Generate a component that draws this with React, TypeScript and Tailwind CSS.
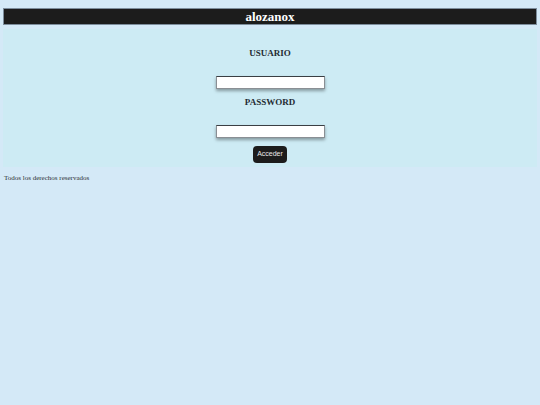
export default function App() {
  return (
    <div className="min-h-screen bg-[#d4e9f7] px-[3px] pt-[8px]" style={{ fontFamily: '"Liberation Serif", serif' }}>
      <header className="h-[17px] border border-[#7d8d9c] bg-[#1c1c1c] flex items-center justify-center">
        <h1 className="text-[13px] leading-none font-bold text-white">alozanox</h1>
      </header>

      <section className="mt-[4px] bg-[#cdebf4] pt-[19px] pb-[4px] flex flex-col items-center">
        <label className="text-[9px] leading-[11px] font-bold text-[#1f2b33]">USUARIO</label>
        <input
          type="text"
          className="mt-[17px] w-[109px] h-[13px] bg-white border border-[#8a8f94] border-t-[#3a3f44] shadow-[0_2px_3px_rgba(0,0,0,0.35)] outline-none"
        />
        <label className="mt-[8px] text-[9px] leading-[11px] font-bold text-[#1f2b33]">PASSWORD</label>
        <input
          type="password"
          className="mt-[17px] w-[109px] h-[13px] bg-white border border-[#8a8f94] border-t-[#3a3f44] shadow-[0_2px_3px_rgba(0,0,0,0.35)] outline-none"
        />
        <button
          className="mt-[8px] w-[34px] h-[17px] rounded-[4px] bg-[#1c1c1c] text-[7px] text-[#e8e8e8] flex items-center justify-center"
          style={{ fontFamily: '"Liberation Sans", sans-serif' }}
        >
          Acceder
        </button>
      </section>

      <footer className="mt-[7px] pl-px text-[7px] leading-[9px] text-[#2b2f33]">Todos los derechos reservados</footer>
    </div>
  );
}
